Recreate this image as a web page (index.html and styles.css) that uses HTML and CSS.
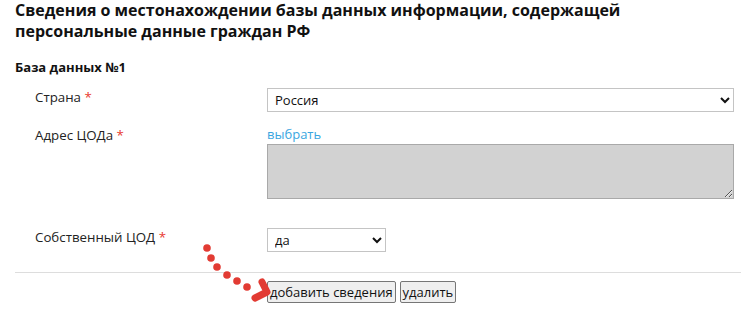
FILE: index.html
```html
<!DOCTYPE html>
<html lang="ru">
<head>
<meta charset="utf-8">
<link rel="stylesheet" href="styles.css">
</head>
<body>
<div class="page">
  <h1 class="title">Сведения о местонахождении базы данных информации, содержащей персональные данные граждан РФ</h1>
  <h2 class="subtitle">База данных №1</h2>
  <div class="row row-country">
    <label class="label">Страна <span class="req">*</span></label>
    <div class="control">
      <select class="select select-wide"><option>Россия</option></select>
    </div>
  </div>
  <div class="row row-address">
    <label class="label">Адрес ЦОДа <span class="req">*</span></label>
    <div class="control">
      <a class="link" href="#">выбрать</a>
      <textarea class="area" disabled></textarea>
    </div>
  </div>
  <div class="row row-own">
    <label class="label">Собственный ЦОД <span class="req">*</span></label>
    <div class="control">
      <select class="select select-small"><option>да</option></select>
    </div>
  </div>
  <hr class="divider">
  <div class="actions">
    <button class="btn">добавить сведения</button>
    <button class="btn">удалить</button>
  </div>
  <svg class="pointer" width="80" height="70" viewBox="0 0 80 70" xmlns="http://www.w3.org/2000/svg">
    <g fill="#e23b33">
      <circle cx="7" cy="8" r="3.8"/>
      <circle cx="11" cy="18" r="3.8"/>
      <circle cx="17" cy="27" r="3.8"/>
      <circle cx="27" cy="35" r="3.8"/>
      <circle cx="37" cy="41" r="3.8"/>
      <circle cx="47" cy="47" r="3.8"/>
    </g>
    <path d="M62 42 L67 52 L55 58" fill="none" stroke="#e23b33" stroke-width="7" stroke-linecap="round" stroke-linejoin="round"/>
  </svg>
</div>
</body>
</html>
```
FILE: styles.css
```css
html, body {
  margin: 0;
  padding: 0;
  background: #fff;
}
body {
  font-family: "Open Sans", "Liberation Sans", sans-serif;
  color: #222;
}
.page {
  position: relative;
  padding: 0 11px 0 15px;
}
.title {
  margin: 0;
  max-width: 660px;
  font-size: 16px;
  line-height: 21px;
  font-weight: 700;
  color: #111;
}
.subtitle {
  margin: 17px 0 0;
  font-size: 13px;
  line-height: 16px;
  font-weight: 700;
  color: #111;
}
.row {
  display: grid;
  grid-template-columns: 232px 467px;
  padding-left: 20px;
  align-items: start;
}
.row-country {
  margin-top: 12px;
}
.row-address {
  margin-top: 13px;
}
.row-own {
  margin-top: 28px;
}
.label {
  font-size: 13.3px;
  line-height: 20px;
  color: #222;
}
.req {
  color: #e8382f;
}
.control {
  display: flex;
  flex-direction: column;
  align-items: flex-start;
}
.select {
  box-sizing: border-box;
  height: 24px;
  margin-top: 1px;
  padding: 0 3px;
  border: 1px solid #c4c4c4;
  border-radius: 0;
  background: #fff;
  font-family: "Open Sans", "Liberation Sans", sans-serif;
  font-size: 13px;
  color: #111;
}
.select-wide {
  width: 467px;
}
.select-small {
  width: 119px;
}
.link {
  font-size: 13px;
  line-height: 19px;
  color: #3aa6df;
  text-decoration: none;
}
.area {
  box-sizing: border-box;
  display: block;
  width: 467px;
  height: 55px;
  margin: 0;
  border: 1px solid #a9a9a9;
  border-radius: 0;
  background: #d2d2d2;
}
.divider {
  margin: 20px 0 0;
  border: 0;
  border-top: 1px solid #ddd;
  width: 726px;
}
.actions {
  display: flex;
  gap: 4px;
  margin-top: 8px;
  padding-left: 252px;
}
.btn {
  height: 22px;
  padding: 0 2px;
  border: 1px solid #767676;
  border-radius: 2px;
  background: #efefef;
  font-family: "Open Sans", "Liberation Sans", sans-serif;
  font-size: 13px;
  line-height: 18px;
  color: #111;
}
.pointer {
  position: absolute;
  left: 200px;
  top: 240px;
}
```
